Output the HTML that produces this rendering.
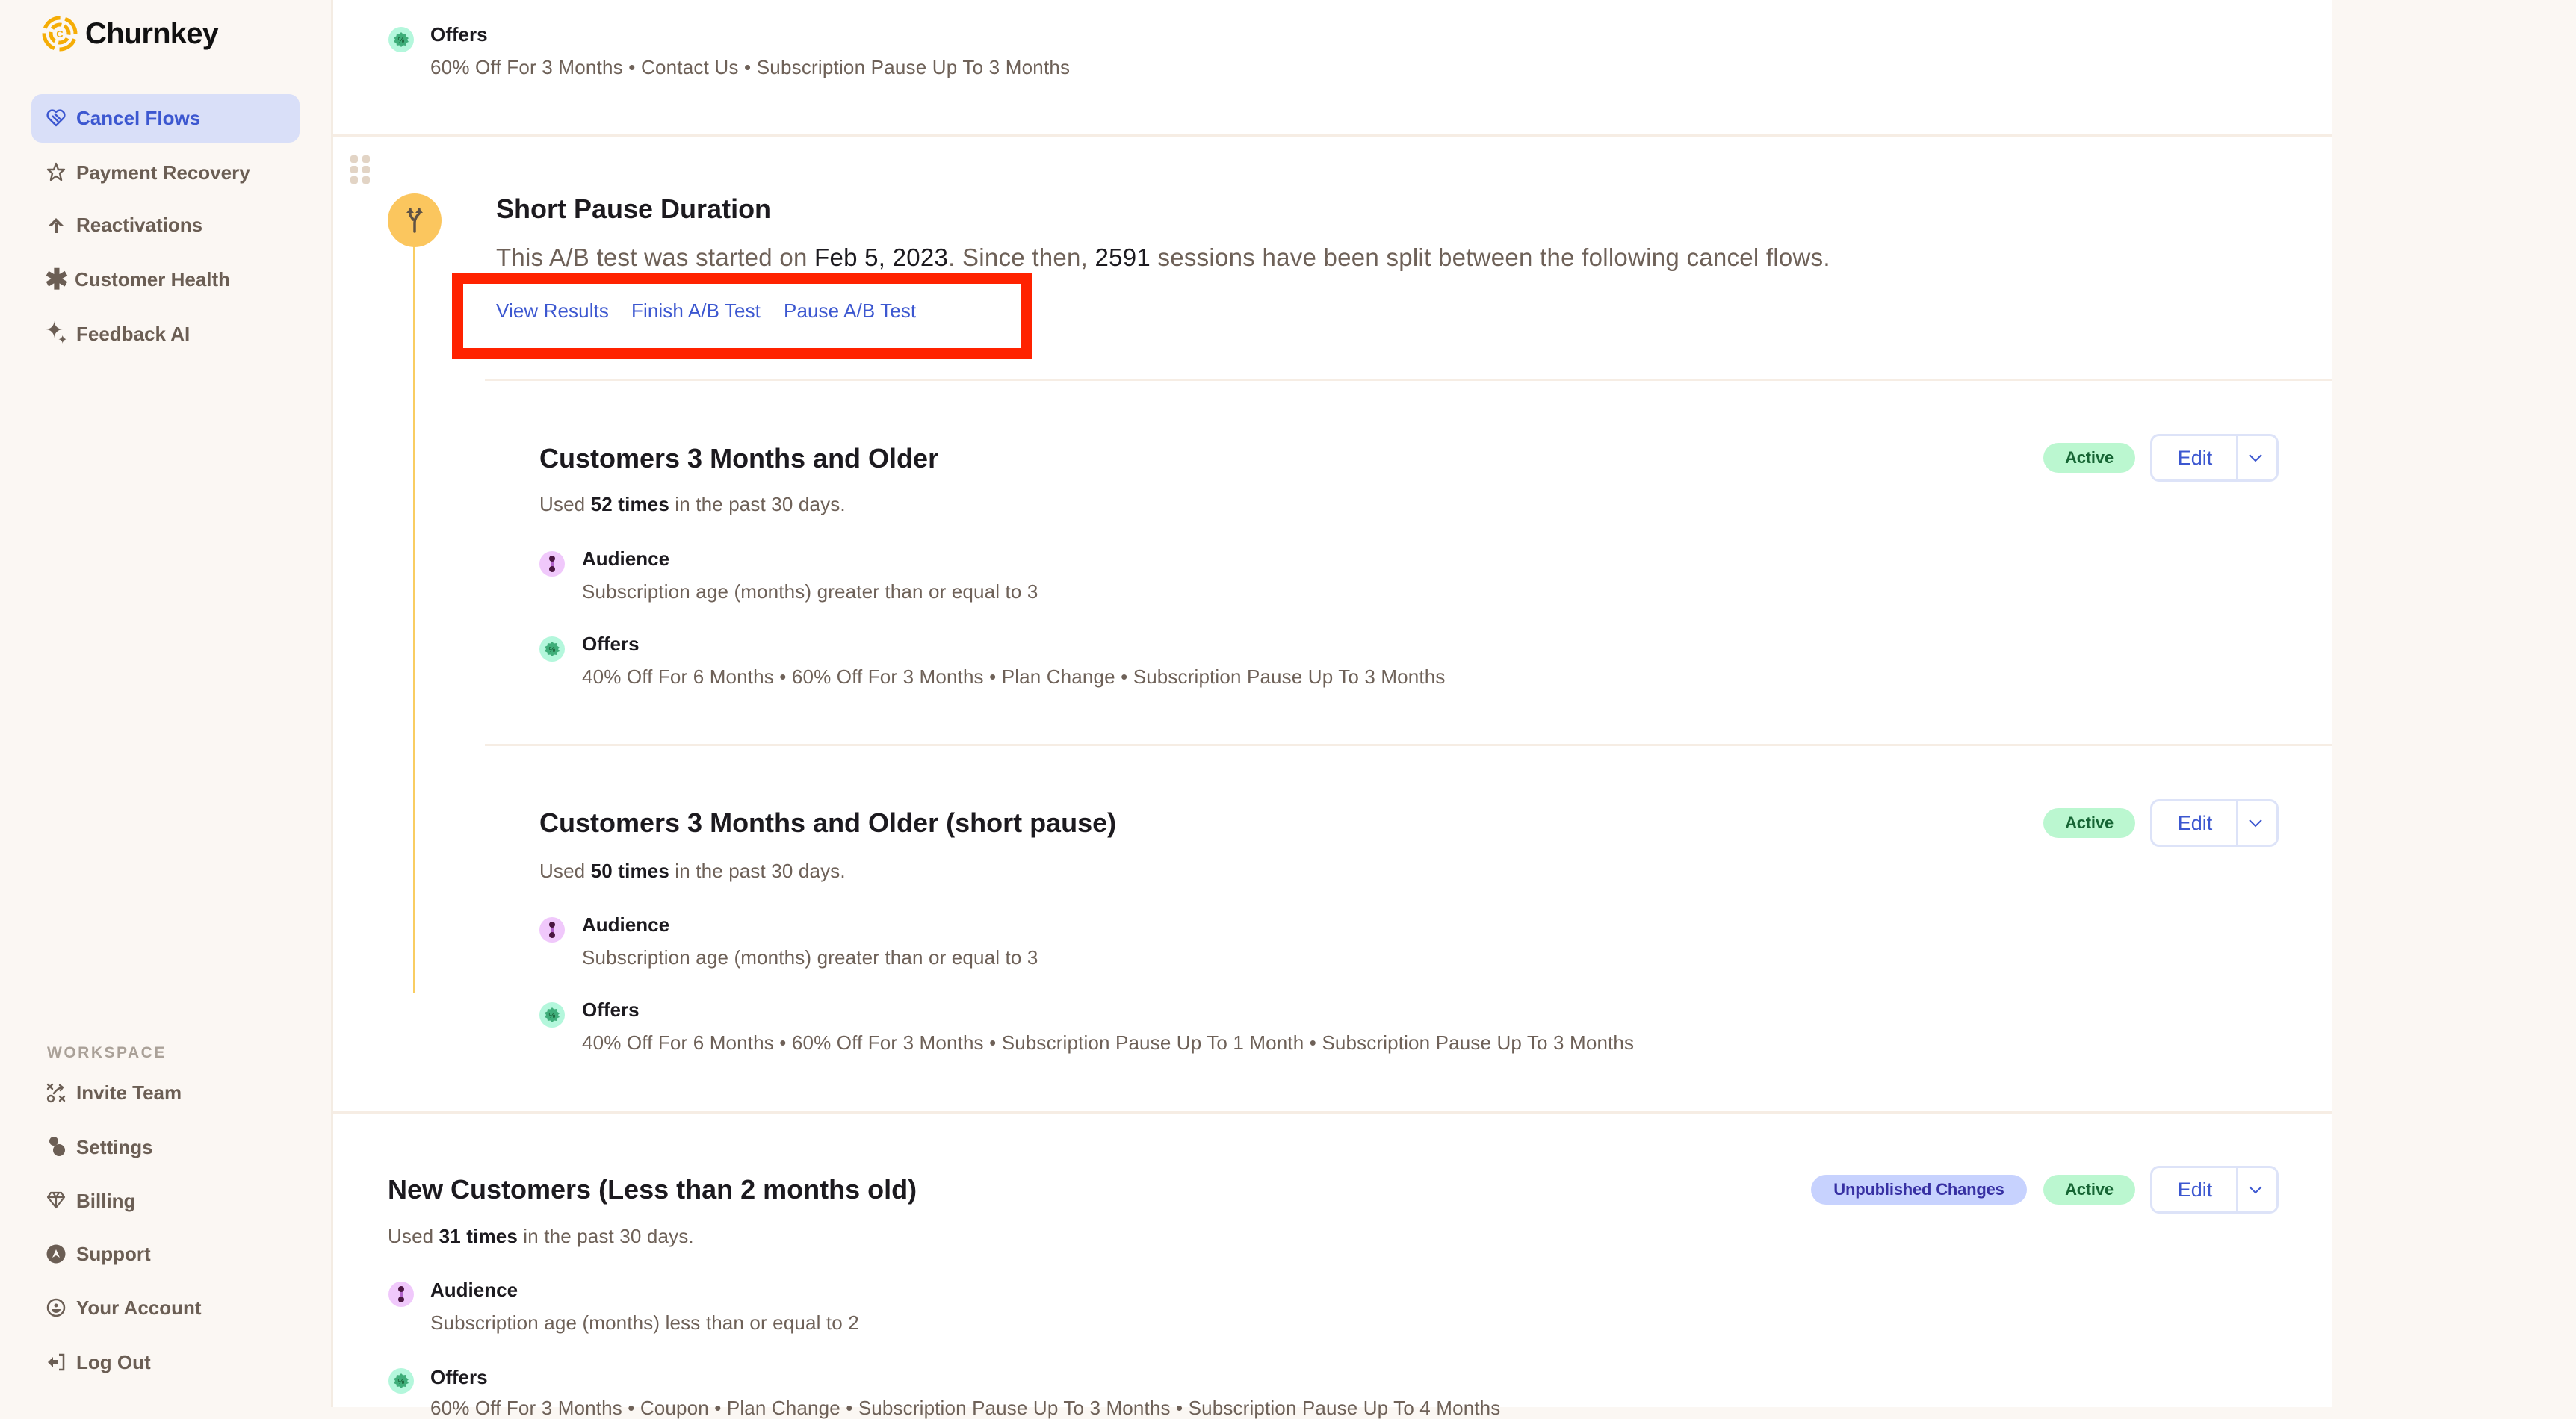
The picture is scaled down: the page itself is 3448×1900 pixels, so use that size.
<!DOCTYPE html>
<html><head><meta charset="utf-8"><style>
*{margin:0;padding:0;box-sizing:border-box}
body{width:3448px;height:1884px;overflow:hidden;background:#fbf7f3;font-family:"Liberation Sans",sans-serif;position:relative}
.a{position:absolute;white-space:nowrap}
.side{position:absolute;left:0;top:0;width:446px;height:1884px;background:#fbf7f3;border-right:3px solid #f4ece3}
.main{position:absolute;left:446px;top:0;width:2676px;height:1884px;background:#fff}
.nav{font-size:26px;color:#6b5e54;line-height:30px;font-weight:bold;letter-spacing:0px}
.t{font-size:36px;font-weight:bold;color:#1c1a1f;line-height:42px;letter-spacing:0px}
.g{font-size:26px;color:#6e6158;line-height:30px;letter-spacing:0.15px}
.g b{color:#1c1a1f}
.h{font-size:26px;font-weight:bold;color:#1c1a1f;line-height:30px;letter-spacing:0px}
.lk{font-size:26px;color:#3c57d0;line-height:30px;letter-spacing:0.1px}
.sep{position:absolute;height:3px;background:#f6ede4}
.ic{position:absolute;width:34px;height:34px;border-radius:50%}
.aud{background:#f0c8fb}
.off{background:#b4f7dc}
.badge{position:absolute;height:40px;border-radius:20px;font-size:22px;font-weight:bold;line-height:40px;text-align:center;letter-spacing:-0.2px}
.act{background:#bbf7d0;color:#166534;width:123px}
.unp{background:#c7d2fe;color:#3730a3;width:289px}
.edit{position:absolute;width:172px;height:64px;border:3px solid #dde3f8;border-radius:12px;background:#fff}
.edit span{position:absolute;left:0;width:114px;top:0;line-height:58px;text-align:center;font-size:27px;color:#3c57d0}
.edit i{position:absolute;left:112px;top:-3px;bottom:-3px;width:3px;background:#dde3f8}
</style></head><body>
<div class="side">
<svg class="a" style="left:55px;top:20px" width="50" height="50" viewBox="0 0 50 50"><g fill="none" stroke="#f5ad06" stroke-width="5"><circle cx="25" cy="25" r="21" stroke-dasharray="26 7" transform="rotate(-70 25 25)"/><circle cx="25" cy="25" r="12" stroke-dasharray="14 5" transform="rotate(-60 25 25)"/></g><text x="25" y="30" font-size="13" font-weight="bold" text-anchor="middle" fill="#f5ad06" font-family="Liberation Sans">C</text></svg>
<div class="a" style="left:114px;top:22px;font-size:40px;font-weight:bold;color:#111;line-height:46px;letter-spacing:-0.8px">Churnkey</div>
<div class="a" style="left:42px;top:126px;width:359px;height:65px;background:#d9dff8;border-radius:14px"></div>
<svg class="a" style="left:62px;top:146px" width="26" height="24" viewBox="0 0 26 24"><path d="M13 22 L3 12 A5.5 5.5 0 0 1 13 4 A5.5 5.5 0 0 1 23 12 Z M8 9 L16 17 M11 6 L19 14" fill="none" stroke="#3c57d0" stroke-width="2.4" stroke-linejoin="round"/></svg>
<div class="a nav" style="left:102px;top:143px;color:#3c57d0">Cancel Flows</div>
<svg class="a" style="left:62px;top:217px" width="26" height="26" viewBox="0 0 26 26"><path d="M13 2 L16 10 L24 10 L18 15 L20 24 L13 19 L6 24 L8 15 L2 10 L10 10 Z" fill="none" stroke="#6b5e54" stroke-width="2.4" stroke-linejoin="round"/></svg>
<div class="a nav" style="left:102px;top:216px">Payment Recovery</div>
<svg class="a" style="left:62px;top:290px" width="26" height="24" viewBox="0 0 26 24"><path d="M13 2 L24 13 L19 13 L13 7 L7 13 L2 13 Z M11 9 H15 V22 H11 Z" fill="#6b5e54"/></svg>
<div class="a nav" style="left:102px;top:286px">Reactivations</div>
<div class="a" style="left:60px;top:356px;font-size:38px;line-height:38px;color:#6b5e54;font-weight:bold">✱</div>
<div class="a nav" style="left:100px;top:359px">Customer Health</div>
<div class="a" style="left:60px;top:428px;font-size:30px;line-height:30px;color:#6b5e54">✦</div>
<div class="a" style="left:77px;top:448px;font-size:16px;line-height:16px;color:#6b5e54">✦</div>
<div class="a nav" style="left:102px;top:432px">Feedback AI</div>
<div class="a" style="left:63px;top:1398px;font-size:21px;font-weight:bold;color:#aaa198;letter-spacing:2.5px;line-height:24px">WORKSPACE</div>
<svg class="a" style="left:62px;top:1450px" width="28" height="28" viewBox="0 0 28 28"><g fill="none" stroke="#6b5e54" stroke-width="2.4" stroke-linecap="round"><path d="M2 2 L8 8 M8 2 L2 8 M18 24 L24 18 M18 18 L24 24"/><circle cx="6" cy="21" r="4"/><path d="M10 14 Q16 6 22 6 M18 3 L22 6 L19 10"/></g></svg>
<div class="a nav" style="left:102px;top:1448px">Invite Team</div>
<svg class="a" style="left:64px;top:1521px" width="24" height="28"><circle cx="8" cy="7" r="6" fill="#6b5e54"/><circle cx="15" cy="19" r="8" fill="#6b5e54"/></svg>
<div class="a nav" style="left:102px;top:1521px">Settings</div>
<svg class="a" style="left:62px;top:1595px" width="26" height="24" viewBox="0 0 26 24"><path d="M6 2 H20 L24 8 L13 22 L2 8 Z M2 8 H24 M9 2 L13 8 L17 2 M13 8 V22" fill="none" stroke="#6b5e54" stroke-width="2.2" stroke-linejoin="round"/></svg>
<div class="a nav" style="left:102px;top:1593px">Billing</div>
<svg class="a" style="left:62px;top:1666px" width="26" height="26"><circle cx="13" cy="13" r="12.5" fill="#6b5e54"/><path d="M13 7 L18 18 L13 15 L8 18 Z" fill="#fbf7f3"/></svg>
<div class="a nav" style="left:102px;top:1664px">Support</div>
<svg class="a" style="left:62px;top:1738px" width="26" height="26"><circle cx="13" cy="13" r="11" fill="none" stroke="#6b5e54" stroke-width="2.5"/><circle cx="13" cy="10" r="2.5" fill="#6b5e54"/><path d="M7 15 H19 A6 5 0 0 1 7 15Z" fill="#6b5e54"/></svg>
<div class="a nav" style="left:102px;top:1736px">Your Account</div>
<svg class="a" style="left:62px;top:1811px" width="26" height="26" viewBox="0 0 26 26"><path d="M17 3 H23 V23 H17" fill="none" stroke="#6b5e54" stroke-width="2.5"/><path d="M2 13 L9 6 V10 H16 V16 H9 V20 Z" fill="#6b5e54"/></svg>
<div class="a nav" style="left:102px;top:1809px">Log Out</div>
</div>

<div class="main"></div>
<!-- top section -->
<div class="ic off" style="left:520px;top:36px"></div><svg class="a" style="left:526px;top:42px" width="22" height="22" viewBox="0 0 22 22"><path d="M11 1 L13.5 3.5 L17 3 L17.5 6.5 L21 9 L19 11 L21 14 L17.5 15.5 L17 19 L13.5 18.5 L11 21 L8.5 18.5 L5 19 L4.5 15.5 L1 14 L3 11 L1 8 L4.5 6.5 L5 3 L8.5 3.5 Z" fill="#3fae7a"/><text x="11" y="15" font-size="10" text-anchor="middle" fill="#14532d" font-family="Liberation Sans">%</text></svg>
<div class="a h" style="left:576px;top:31px">Offers</div>
<div class="a g" style="left:576px;top:75px;letter-spacing:0.2px">60% Off For 3 Months • Contact Us • Subscription Pause Up To 3 Months</div>
<div class="sep" style="left:446px;top:179px;width:2676px;height:4px"></div>

<!-- AB test -->
<svg class="a" style="left:469px;top:208px" width="28" height="38"><g fill="#e2d4c5"><rect x="0" y="0" width="10" height="10" rx="3"/><rect x="16" y="0" width="10" height="10" rx="3"/><rect x="0" y="14" width="10" height="10" rx="3"/><rect x="16" y="14" width="10" height="10" rx="3"/><rect x="0" y="28" width="10" height="10" rx="3"/><rect x="16" y="28" width="10" height="10" rx="3"/></g></svg>
<div class="a" style="left:553px;top:330px;width:3px;height:999px;background:#f9cd62"></div>
<div class="a" style="left:519px;top:259px;width:72px;height:72px;border-radius:50%;background:#fbc65e"></div>
<svg class="a" style="left:537px;top:276px" width="36" height="38" viewBox="0 0 36 38"><path d="M18 34 V22 Q18 16 24 10 V4 M12 12 L16 18" fill="none" stroke="#5f5244" stroke-width="3.5" stroke-linecap="round"/><path d="M12 4 V9" stroke="#5f5244" stroke-width="3.5" stroke-linecap="round"/><path d="M7 9 L12 3 L17 9 Z M19 9 L24 3 L29 9Z" fill="#5f5244"/></svg>
<div class="a t" style="left:664px;top:259px">Short Pause Duration</div>
<div class="a" style="left:664px;top:326px;font-size:33px;line-height:38px;color:#6e6158;letter-spacing:0.27px">This A/B test was started on <span style="color:#1c1a1f">Feb 5, 2023</span>. Since then, <span style="color:#1c1a1f">2591</span> sessions have been split between the following cancel flows.</div>
<div class="a lk" style="left:664px;top:401px">View Results</div>
<div class="a lk" style="left:845px;top:401px">Finish A/B Test</div>
<div class="a lk" style="left:1049px;top:401px">Pause A/B Test</div>
<div class="a" style="left:605px;top:365px;width:777px;height:116px;border:15px solid #ff2200"></div>
<div class="sep" style="left:649px;top:507px;width:2473px"></div>

<!-- card1 -->
<div class="a t" style="left:722px;top:593px">Customers 3 Months and Older</div>
<div class="a g" style="left:722px;top:660px">Used <b>52 times</b> in the past 30 days.</div>
<div class="ic aud" style="left:722px;top:738px"></div><svg class="a" style="left:731px;top:742px" width="16" height="26"><rect x="6" y="6" width="4" height="14" fill="#b061c9"/><circle cx="8" cy="6" r="4" fill="#4a1540"/><circle cx="8" cy="20" r="4" fill="#4a1540"/></svg>
<div class="a h" style="left:779px;top:733px">Audience</div>
<div class="a g" style="left:779px;top:777px">Subscription age (months) greater than or equal to 3</div>
<div class="ic off" style="left:722px;top:852px"></div><svg class="a" style="left:728px;top:858px" width="22" height="22" viewBox="0 0 22 22"><path d="M11 1 L13.5 3.5 L17 3 L17.5 6.5 L21 9 L19 11 L21 14 L17.5 15.5 L17 19 L13.5 18.5 L11 21 L8.5 18.5 L5 19 L4.5 15.5 L1 14 L3 11 L1 8 L4.5 6.5 L5 3 L8.5 3.5 Z" fill="#3fae7a"/><text x="11" y="15" font-size="10" text-anchor="middle" fill="#14532d" font-family="Liberation Sans">%</text></svg>
<div class="a h" style="left:779px;top:847px">Offers</div>
<div class="a g" style="left:779px;top:891px">40% Off For 6 Months • 60% Off For 3 Months • Plan Change • Subscription Pause Up To 3 Months</div>
<div class="badge act" style="left:2735px;top:593px">Active</div>
<div class="edit" style="left:2878px;top:581px"><span>Edit</span><i></i><svg class="a" style="left:128px;top:23px" width="20" height="12"><path d="M2 2 L10 10 L18 2" fill="none" stroke="#3c57d0" stroke-width="2"/></svg></div>
<div class="sep" style="left:649px;top:996px;width:2473px"></div>

<!-- card2 -->
<div class="a t" style="left:722px;top:1081px">Customers 3 Months and Older (short pause)</div>
<div class="a g" style="left:722px;top:1151px">Used <b>50 times</b> in the past 30 days.</div>
<div class="ic aud" style="left:722px;top:1228px"></div><svg class="a" style="left:731px;top:1232px" width="16" height="26"><rect x="6" y="6" width="4" height="14" fill="#b061c9"/><circle cx="8" cy="6" r="4" fill="#4a1540"/><circle cx="8" cy="20" r="4" fill="#4a1540"/></svg>
<div class="a h" style="left:779px;top:1223px">Audience</div>
<div class="a g" style="left:779px;top:1267px">Subscription age (months) greater than or equal to 3</div>
<div class="ic off" style="left:722px;top:1342px"></div><svg class="a" style="left:728px;top:1348px" width="22" height="22" viewBox="0 0 22 22"><path d="M11 1 L13.5 3.5 L17 3 L17.5 6.5 L21 9 L19 11 L21 14 L17.5 15.5 L17 19 L13.5 18.5 L11 21 L8.5 18.5 L5 19 L4.5 15.5 L1 14 L3 11 L1 8 L4.5 6.5 L5 3 L8.5 3.5 Z" fill="#3fae7a"/><text x="11" y="15" font-size="10" text-anchor="middle" fill="#14532d" font-family="Liberation Sans">%</text></svg>
<div class="a h" style="left:779px;top:1337px">Offers</div>
<div class="a g" style="left:779px;top:1381px">40% Off For 6 Months • 60% Off For 3 Months • Subscription Pause Up To 1 Month • Subscription Pause Up To 3 Months</div>
<div class="badge act" style="left:2735px;top:1082px">Active</div>
<div class="edit" style="left:2878px;top:1070px"><span>Edit</span><i></i><svg class="a" style="left:128px;top:23px" width="20" height="12"><path d="M2 2 L10 10 L18 2" fill="none" stroke="#3c57d0" stroke-width="2"/></svg></div>
<div class="sep" style="left:446px;top:1487px;width:2676px;height:4px"></div>

<!-- card3 -->
<div class="a t" style="left:519px;top:1572px">New Customers (Less than 2 months old)</div>
<div class="a g" style="left:519px;top:1640px">Used <b>31 times</b> in the past 30 days.</div>
<div class="ic aud" style="left:520px;top:1716px"></div><svg class="a" style="left:529px;top:1720px" width="16" height="26"><rect x="6" y="6" width="4" height="14" fill="#b061c9"/><circle cx="8" cy="6" r="4" fill="#4a1540"/><circle cx="8" cy="20" r="4" fill="#4a1540"/></svg>
<div class="a h" style="left:576px;top:1712px">Audience</div>
<div class="a g" style="left:576px;top:1756px">Subscription age (months) less than or equal to 2</div>
<div class="ic off" style="left:520px;top:1832px"></div><svg class="a" style="left:526px;top:1838px" width="22" height="22" viewBox="0 0 22 22"><path d="M11 1 L13.5 3.5 L17 3 L17.5 6.5 L21 9 L19 11 L21 14 L17.5 15.5 L17 19 L13.5 18.5 L11 21 L8.5 18.5 L5 19 L4.5 15.5 L1 14 L3 11 L1 8 L4.5 6.5 L5 3 L8.5 3.5 Z" fill="#3fae7a"/><text x="11" y="15" font-size="10" text-anchor="middle" fill="#14532d" font-family="Liberation Sans">%</text></svg>
<div class="a h" style="left:576px;top:1829px">Offers</div>
<div class="a g" style="left:576px;top:1870px">60% Off For 3 Months • Coupon • Plan Change • Subscription Pause Up To 3 Months • Subscription Pause Up To 4 Months</div>
<div class="badge unp" style="left:2424px;top:1573px">Unpublished Changes</div>
<div class="badge act" style="left:2735px;top:1573px">Active</div>
<div class="edit" style="left:2878px;top:1561px"><span>Edit</span><i></i><svg class="a" style="left:128px;top:23px" width="20" height="12"><path d="M2 2 L10 10 L18 2" fill="none" stroke="#3c57d0" stroke-width="2"/></svg></div>
</body></html>
